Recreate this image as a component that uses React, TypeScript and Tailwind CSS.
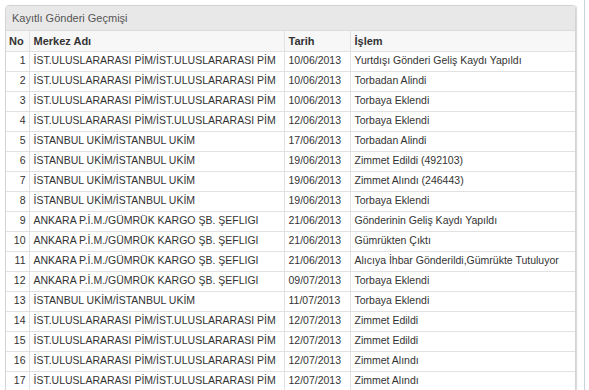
import React from 'react';

type Row = { no: number; merkez: string; tarih: string; islem: string };

const IST = 'İST.ULUSLARARASI PİM/İST.ULUSLARARASI PİM';
const UKIM = 'İSTANBUL UKİM/İSTANBUL UKİM';
const ANK = 'ANKARA P.İ.M./GÜMRÜK KARGO ŞB. ŞEFLIGI';

const rows: Row[] = [
  { no: 1, merkez: IST, tarih: '10/06/2013', islem: 'Yurtdışı Gönderi Geliş Kaydı Yapıldı' },
  { no: 2, merkez: IST, tarih: '10/06/2013', islem: 'Torbadan Alindi' },
  { no: 3, merkez: IST, tarih: '10/06/2013', islem: 'Torbaya Eklendi' },
  { no: 4, merkez: IST, tarih: '12/06/2013', islem: 'Torbaya Eklendi' },
  { no: 5, merkez: UKIM, tarih: '17/06/2013', islem: 'Torbadan Alindi' },
  { no: 6, merkez: UKIM, tarih: '19/06/2013', islem: 'Zimmet Edildi (492103)' },
  { no: 7, merkez: UKIM, tarih: '19/06/2013', islem: 'Zimmet Alındı (246443)' },
  { no: 8, merkez: UKIM, tarih: '19/06/2013', islem: 'Torbaya Eklendi' },
  { no: 9, merkez: ANK, tarih: '21/06/2013', islem: 'Gönderinin Geliş Kaydı Yapıldı' },
  { no: 10, merkez: ANK, tarih: '21/06/2013', islem: 'Gümrükten Çıktı' },
  { no: 11, merkez: ANK, tarih: '21/06/2013', islem: 'Alıcıya İhbar Gönderildi,Gümrükte Tutuluyor' },
  { no: 12, merkez: ANK, tarih: '09/07/2013', islem: 'Torbaya Eklendi' },
  { no: 13, merkez: UKIM, tarih: '11/07/2013', islem: 'Torbaya Eklendi' },
  { no: 14, merkez: IST, tarih: '12/07/2013', islem: 'Zimmet Edildi' },
  { no: 15, merkez: IST, tarih: '12/07/2013', islem: 'Zimmet Edildi' },
  { no: 16, merkez: IST, tarih: '12/07/2013', islem: 'Zimmet Alındı' },
  { no: 17, merkez: IST, tarih: '12/07/2013', islem: 'Zimmet Alındı' },
];

export default function App() {
  return (
    <div className="flex h-[390px] overflow-hidden bg-white text-[10.5px] text-[#333] [font-family:'Liberation_Sans',Arial,sans-serif]">
      <div className="pl-[5px] pt-[5px]">
        <div className="w-[571px] rounded-t-[4px] border border-[#d4d4d4] shadow-[1px_0_1px_#d8d8d8]">
          <div className="flex h-[25px] items-center rounded-t-[4px] border-b border-[#dcdcdc] bg-[#e8e8e8] pl-[6px] text-[11px] text-[#555]">
            Kayıtlı Gönderi Geçmişi
          </div>
          <table className="w-full table-fixed border-collapse">
            <colgroup>
              <col className="w-[23px]" />
              <col className="w-[255px]" />
              <col className="w-[66px]" />
              <col />
            </colgroup>
            <thead>
              <tr className="h-[20px] bg-[#f7f7f7] text-[11px] font-bold">
                <th className="border-r border-b border-[#e2e2e2] px-[3px] text-left">No</th>
                <th className="border-r border-b border-[#e2e2e2] px-[4px] text-left">Merkez Adı</th>
                <th className="border-r border-b border-[#e2e2e2] px-[4px] text-left">Tarih</th>
                <th className="border-b border-[#e2e2e2] px-[4px] text-left">İşlem</th>
              </tr>
            </thead>
            <tbody>
              {rows.map((r) => (
                <tr key={r.no} className="h-[20px]">
                  <td className="border-r border-b border-[#e2e2e2] pr-[3px] text-right">{r.no}</td>
                  <td className="whitespace-nowrap border-r border-b border-[#e2e2e2] px-[4px]">{r.merkez}</td>
                  <td className="whitespace-nowrap border-r border-b border-[#e2e2e2] px-[4px]">{r.tarih}</td>
                  <td className="whitespace-nowrap border-b border-[#e2e2e2] px-[4px]">{r.islem}</td>
                </tr>
              ))}
            </tbody>
          </table>
        </div>
      </div>
      <div className="ml-[8px] w-px bg-[#c9d1dc]" />
    </div>
  );
}
